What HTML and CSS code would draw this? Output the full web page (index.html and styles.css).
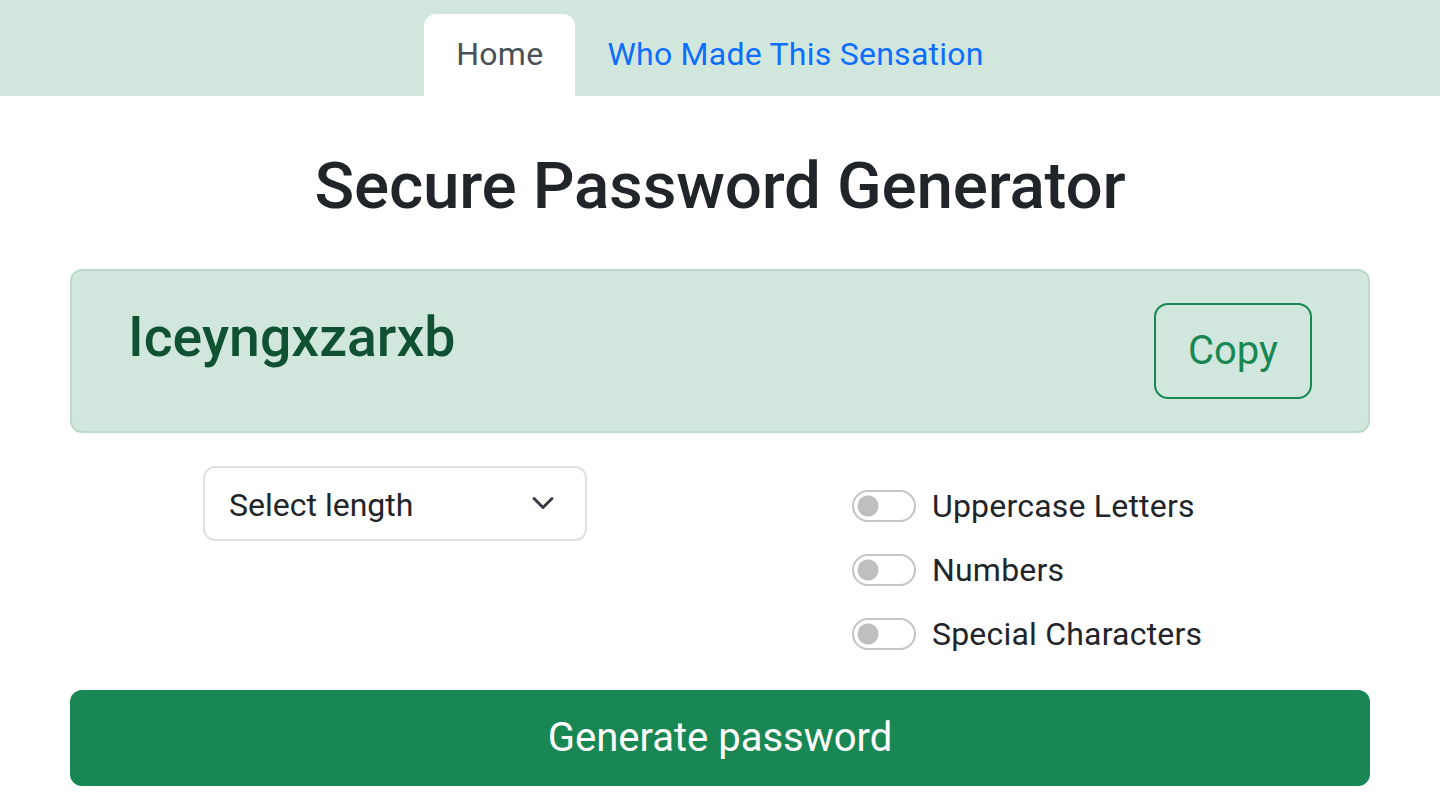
FILE: index.html
```html
<!DOCTYPE html>
<html lang="en">
<head>
<meta charset="utf-8">
<title>Secure Password Generator</title>
<link rel="stylesheet" href="styles.css">
</head>
<body>
<nav class="topnav">
  <ul class="tabs">
    <li><a class="tab active" href="#">Home</a></li>
    <li><a class="tab" href="#">Who Made This Sensation</a></li>
  </ul>
</nav>
<main class="container">
  <h1 class="title">Secure Password Generator</h1>
  <section class="result">
    <h2 class="password">Iceyngxzarxb</h2>
    <button class="btn-copy" type="button">Copy</button>
  </section>
  <section class="options">
    <div class="col col-left">
      <div class="select" role="combobox">
        <span>Select length</span>
        <svg class="chev" width="24" height="24" viewBox="0 0 16 16" aria-hidden="true"><path d="m2 5 6 6 6-6" fill="none" stroke="#343a40" stroke-linecap="round" stroke-linejoin="round" stroke-width="2"/></svg>
      </div>
    </div>
    <div class="col col-right">
      <label class="check"><span class="switch"></span><span class="lbl">Uppercase Letters</span></label>
      <label class="check"><span class="switch"></span><span class="lbl">Numbers</span></label>
      <label class="check"><span class="switch"></span><span class="lbl">Special Characters</span></label>
    </div>
  </section>
  <button class="btn-generate" type="button">Generate password</button>
</main>
</body>
</html>
```
FILE: styles.css
```css
* { box-sizing: border-box; }
html, body { margin: 0; padding: 0; }
body {
  font-family: Roboto, Inter, "Liberation Sans", sans-serif;
  color: #212529;
  background: #fff;
  font-size: 32px;
  line-height: 48px;
}
.topnav {
  background: #d1e7dd;
  padding-top: 14px;
  height: 96px;
}
.tabs {
  list-style: none;
  margin: 0;
  padding: 0;
  display: flex;
  justify-content: center;
}
.tab {
  display: block;
  padding: 16px 32px;
  font-size: 32px;
  line-height: 48px;
  letter-spacing: 0.25px;
  color: #0d6efd;
  text-decoration: none;
  border-radius: 12px 12px 0 0;
  height: 82px;
}
.tab.active {
  background: #fff;
  color: #495057;
}
.container {
  width: 1300px;
  margin: 0 auto;
}
.title {
  margin: 51px 0 0;
  text-align: center;
  font-size: 65.6px;
  font-weight: 500;
  line-height: 1.2;
  letter-spacing: -0.2px;
  color: #212529;
}
.result {
  margin-top: 43px;
  background: #d1e7dd;
  border: 2px solid #badbcc;
  border-radius: 12px;
  padding: 32px 56px;
  display: flex;
  justify-content: space-between;
  align-items: flex-start;
}
.password {
  margin: 0;
  padding-top: 2px;
  font-size: 55.4px;
  font-weight: 500;
  line-height: 1.2;
  color: #0f5132;
}
.btn-copy {
  font-family: inherit;
  font-size: 40px;
  line-height: 60px;
  padding: 16px 32px;
  border: 2px solid #198754;
  border-radius: 14px;
  background: transparent;
  color: #198754;
}
.options {
  display: flex;
  margin-top: 33px;
}
.col { width: 650px; }
.col-left {
  display: flex;
  justify-content: center;
  align-items: flex-start;
}
.select {
  width: 384px;
  height: 75px;
  border: 2px solid #dee2e6;
  border-radius: 12px;
  padding: 14px 30px 10px 24px;
  display: flex;
  align-items: center;
  justify-content: space-between;
  color: #212529;
}
.chev { width: 24px; height: 24px; margin-top: -4px; }
.col-right {
  padding: 16px 0 0 132px;
  display: flex;
  flex-direction: column;
  gap: 16px;
}
.check {
  display: flex;
  align-items: center;
  height: 48px;
}
.switch {
  width: 64px;
  height: 32px;
  border: 2px solid #c4c4c4;
  border-radius: 32px;
  background: radial-gradient(circle at 14px 50%, #bfbfbf 10px, rgba(191,191,191,0) 11px);
  margin-right: 16px;
  flex: none;
}
.lbl { color: #212529; letter-spacing: 0.2px; }
.btn-generate {
  display: block;
  width: 100%;
  margin-top: 32px;
  height: 96px;
  font-family: inherit;
  font-size: 40px;
  line-height: 60px;
  border: 0;
  border-radius: 12px;
  background: #198754;
  color: #fff;
}
```
